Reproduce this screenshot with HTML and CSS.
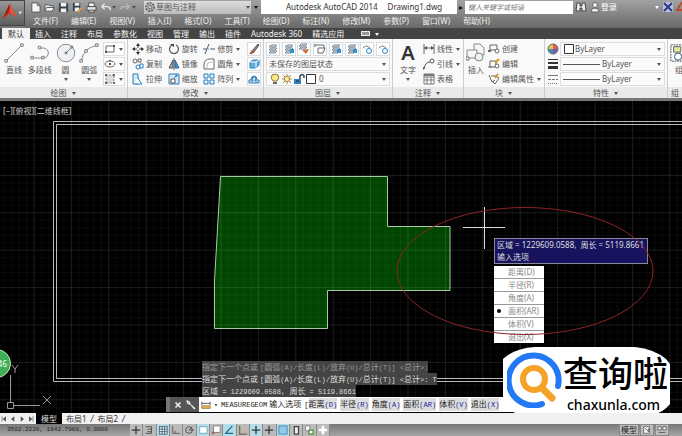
FILE: index.html
```html
<!DOCTYPE html>
<html lang="zh-CN">
<head>
<meta charset="utf-8">
<title>Autodesk AutoCAD 2014 - Drawing1.dwg</title>
<link rel="stylesheet" href="styles.css">
</head>
<body>
<svg class="defs" aria-hidden="true">
  <symbol id="new" viewBox="0 0 12 12"><path d="M2 1h6l3 3v7H2z" fill="#f4f6f8" stroke="#555"/><path d="M8 1v3h3" fill="none" stroke="#555"/></symbol>
  <symbol id="open" viewBox="0 0 12 12"><path d="M1 10V3h4l1 1h4v2" fill="#dde3e8" stroke="#555"/><path d="M1 10l2-4h8l-2 4z" fill="#f4f6f8" stroke="#555"/></symbol>
  <symbol id="save" viewBox="0 0 12 12"><path d="M1 1h9l1 1v9H1z" fill="#34404c"/><path d="M3 1h6v4H3zM3 7h6v4H3z" fill="#eef2f5"/></symbol>
  <symbol id="saveas" viewBox="0 0 12 12"><path d="M1 1h8v9H1z" fill="#34404c"/><path d="M3 1h5v3H3zM3 6h5v4H3z" fill="#eef2f5"/><path d="M6 11l5-5" stroke="#d79a42" stroke-width="2"/></symbol>
  <symbol id="print" viewBox="0 0 12 12"><path d="M3 1h6v4H3zM3 8h6v3H3z" fill="#fff" stroke="#444"/><path d="M1 5h10v4H1z" fill="#e0e2e4" stroke="#444"/></symbol>
  <symbol id="undo" viewBox="0 0 12 12"><path d="M5 2L2 5l3 3M2 5h6q3 0 3 3v1" fill="none" stroke="#e5e5e5" stroke-width="1.500"/></symbol>
  <symbol id="redo" viewBox="0 0 12 12"><path d="M7 2l3 3-3 3M10 5H4Q1 5 1 8" fill="none" stroke="#bbb" stroke-width="1.500"/></symbol>
  <symbol id="gear" viewBox="0 0 12 12"><circle cx="6" cy="6" r="4" fill="none" stroke="#666" stroke-width="2" stroke-dasharray="2 1"/><circle cx="6" cy="6" r="2" fill="none" stroke="#666"/></symbol>
  <symbol id="caret" viewBox="0 0 6 6"><path d="M1 2h4L3 5z" fill="currentColor"/></symbol>
  <symbol id="binoc" viewBox="0 0 12 12"><path d="M2 2h3v3h2V2h3l1 8H7V7H5v3H1z" fill="#eee" stroke="#444"/></symbol>
  <symbol id="user" viewBox="0 0 12 12"><circle cx="6" cy="4" r="2.5" fill="#eee" stroke="#666"/><path d="M2 11q0-4 4-4t4 4z" fill="#eee" stroke="#666"/></symbol>
  <symbol id="exchange" viewBox="0 0 12 12"><path d="M1 1h10v10H1z" fill="#b9c0de"/><path d="M2 2l8 8M10 2l-8 8" stroke="#2d3b87" stroke-width="2"/></symbol>
  <symbol id="line" viewBox="0 0 24 24"><path d="M3 21L21 3" stroke="#777"/><path d="M1 20h3v3H1zM20 1h3v3h-3z" fill="#fff" stroke="#666"/></symbol>
  <symbol id="pline" viewBox="0 0 24 24"><path d="M3 18h13a6 6 0 0 0 0-12h-4" fill="none" stroke="#777"/><path d="M1 16h3v3H1zM14 16h3v3h-3zM10 4h3v3h-3z" fill="#fff" stroke="#666"/></symbol>
  <symbol id="circle" viewBox="0 0 24 24"><circle cx="12" cy="12" r="10.5" fill="#eef1f4" stroke="#778"/><path d="M12 12l7-7" stroke="#667"/><path d="M11 11h2v2h-2zM18 4h2v2h-2z" fill="#fff" stroke="#556"/></symbol>
  <symbol id="arc" viewBox="0 0 24 24"><path d="M3 21Q5 6 21 3" fill="none" stroke="#777"/><path d="M1 20h3v3H1zM7 8h3v3H7zM20 1h3v3h-3z" fill="#fff" stroke="#666"/></symbol>
  <symbol id="rect" viewBox="0 0 12 12"><path d="M2 3h8v6H2z" fill="none" stroke="#666"/><path d="M1 8h2v2H1zM9 2h2v2H9z" fill="#555"/></symbol>
  <symbol id="ellipse" viewBox="0 0 12 12"><ellipse cx="6" cy="6" rx="5" ry="3" fill="none" stroke="#666"/><path d="M5 5h2v2H5zM5 2h2v1H5z" fill="#555"/></symbol>
  <symbol id="hatch" viewBox="0 0 12 12"><path d="M2 2h8v8H2z" fill="#ddd" stroke="#888" stroke-dasharray="2 1"/><path d="M1 1h2v2H1zM9 1h2v2H9zM1 9h2v2H1zM9 9h2v2H9z" fill="#666"/></symbol>
  <symbol id="move" viewBox="0 0 12 12"><path d="M6 1v10M1 6h10" stroke="#444" stroke-dasharray="4 2"/><path d="M4 3l2-3 2 3zM4 9l2 3 2-3zM3 4L0 6l3 2zM9 4l3 2-3 2z" fill="#333"/></symbol>
  <symbol id="rotate" viewBox="0 0 12 12"><path d="M4 2a4.500 4.500 0 1 0 4 0" fill="none" stroke="#555" stroke-width="1.200"/><path d="M2 1h4v3z" fill="#444"/></symbol>
  <symbol id="trim" viewBox="0 0 12 12"><path d="M0 6h4M8 6h4M2 11L6 1" fill="none" stroke="#4d5a66"/><path d="M5 6h3" stroke="#4b94cc" stroke-dasharray="1 1"/></symbol>
  <symbol id="copy" viewBox="0 0 12 12"><circle cx="3" cy="3" r="2" fill="none" stroke="#666"/><path d="M6 1h3v3H6z" fill="none" stroke="#666"/><circle cx="6" cy="9" r="2" fill="#fff" stroke="#287cc0"/><path d="M8 6h3v4H8z" fill="#fff" stroke="#287cc0"/></symbol>
  <symbol id="mirror" viewBox="0 0 12 12"><path d="M5 2v8H1z" fill="#9ab" stroke="#555"/><path d="M7 2v8h4z" fill="#4292cf" stroke="#26689b"/><path d="M6 0v12" stroke="#555"/></symbol>
  <symbol id="fillet" viewBox="0 0 12 12"><path d="M1 11V7q0-6 6-6h4v10z" fill="#fff" stroke="#666"/><path d="M4 11V8q0-4 4-4h3" fill="none" stroke="#bbb"/></symbol>
  <symbol id="stretch" viewBox="0 0 12 12"><path d="M1 1h5v10H1z" fill="#d9eaf7" stroke="#287cc0"/><path d="M5 4l5 7H3" fill="#fff" stroke="#287cc0"/></symbol>
  <symbol id="scale" viewBox="0 0 12 12"><path d="M1 1h10v10H1z" fill="#d9eaf7" stroke="#287cc0"/><path d="M3 6h4v4H3z" fill="#fff" stroke="#555"/><path d="M6 5l3-3M7 2h2v2" fill="none" stroke="#287cc0"/></symbol>
  <symbol id="array" viewBox="0 0 12 12"><path d="M1 1h4v4H1zM7 1h4v4H7zM1 7h4v4H1zM7 7h4v4H7z" fill="#eaf4fb" stroke="#287cc0"/></symbol>
  <symbol id="erase" viewBox="0 0 12 12"><path d="M4 8l6-7 1 1-5 7z" fill="#888" stroke="#555"/><path d="M4 7l3 2-3 2H1z" fill="#a85a4d"/></symbol>
  <symbol id="explode" viewBox="0 0 12 12"><path d="M2 4l3-2h6v5L8 10H2z" fill="#62add9" stroke="#2280bd"/><path d="M2 4h6v6M8 4l3-2" fill="none" stroke="#fff"/></symbol>
  <symbol id="offset" viewBox="0 0 12 12"><path d="M1 10V7h2a3 4 0 1 1 6 0h2v3z" fill="#cae3f4" stroke="#2878b4"/><path d="M3 8h2q-2-4 1-4t1 4h2" fill="none" stroke="#2878b4"/></symbol>
  <symbol id="layer" viewBox="0 0 12 12"><path d="M4 2h6L8 4H2zM4 5h6L8 7H2zM4 8h6l-2 2H2z" fill="#dfe5ea" stroke="#758595"/></symbol>
  <symbol id="layerblue" viewBox="0 0 12 12"><path d="M4 2h6L8 4H2zM4 5h6L8 7H2zM4 8h6l-2 2H2z" fill="#dfe5ea" stroke="#758595"/><path d="M7 6h4v4H7z" fill="#388ecb"/></symbol>
  <symbol id="layerorange" viewBox="0 0 12 12"><path d="M3 1h6L7 3H1zM3 4h6L7 6H1z" fill="#dfe5ea" stroke="#758595"/><path d="M4 7l4 4 3-5z" fill="#c96e37"/></symbol>
  <symbol id="layerprev" viewBox="0 0 12 12"><path d="M1 2h9v3M1 1v3M4 5h7l-2 5H4z" fill="#fff" stroke="#666"/></symbol>
  <symbol id="layersun" viewBox="0 0 12 12"><path d="M2 5q3-4 7 0" fill="none" stroke="#777"/><circle cx="8" cy="8" r="2.500" fill="#fff" stroke="#278acb"/></symbol>
  <symbol id="bulb" viewBox="0 0 12 12"><path d="M4 8Q1 5 3 2q3-2 6 0 2 3-1 6z" fill="#fbe88a" stroke="#927b3a"/><path d="M4 10h4" stroke="#666" stroke-width="2"/></symbol>
  <symbol id="sun" viewBox="0 0 12 12"><path d="M6 1v10M1 6h10M2 2l8 8M10 2l-8 8" stroke="#a5853c"/><circle cx="6" cy="6" r="2.500" fill="#fff2a8" stroke="#a5853c"/></symbol>
  <symbol id="lock" viewBox="0 0 12 12"><path d="M1 6h7v5H1z" fill="#2f83c1"/><path d="M7 6V3q2-3 4 0v2M3 8h3" fill="none" stroke="#345" stroke-width="1.500"/></symbol>
  <symbol id="square" viewBox="0 0 12 12"><path d="M1.500 1.500h9v9h-9z" fill="#fff" stroke="#333"/></symbol>
  <symbol id="dim" viewBox="0 0 12 12"><path d="M1 1v10M11 1v10M1 5h10" fill="none" stroke="#666"/><path d="M1 5l3-2v4zM11 5L8 3v4z" fill="#555"/></symbol>
  <symbol id="leader" viewBox="0 0 12 12"><path d="M1 11Q2 4 7 4" fill="none" stroke="#555"/><circle cx="9" cy="3" r="2" fill="none" stroke="#555"/><path d="M0 12V9l2 1z" fill="#555"/></symbol>
  <symbol id="table" viewBox="0 0 12 12"><path d="M1 1h10v10H1zM1 4h10M1 7h10M4 4v7M8 4v7" fill="#fff" stroke="#777"/><path d="M1 1h10v2H1z" fill="#777"/></symbol>
  <symbol id="insert" viewBox="0 0 20 20"><path d="M8 1h6l4 4v7H8z" fill="#f4f5f6" stroke="#888"/><path d="M1 7h10v8H1z" fill="#f7f7f7" stroke="#888"/><circle cx="13" cy="14" r="4" fill="#eef1f4" stroke="#888"/><path d="M0 14h3v3H0z" fill="#fff" stroke="#777"/></symbol>
  <symbol id="create" viewBox="0 0 12 12"><path d="M2 2h7v5H2z" fill="none" stroke="#666"/><circle cx="9" cy="8" r="2" fill="#fff" stroke="#666"/><path d="M0 7h3v2H0z" fill="#666"/></symbol>
  <symbol id="edit" viewBox="0 0 12 12"><path d="M2 3h6v6H2zM0 9h4" fill="none" stroke="#666"/><circle cx="9" cy="8" r="2" fill="#fff" stroke="#666"/><path d="M7 5l4-4" stroke="#d39427" stroke-width="2"/></symbol>
  <symbol id="attr" viewBox="0 0 12 12"><path d="M1 2l3 7 3-2M3 3h5l3 2-4 6-3-3" fill="#fff" stroke="#665"/><path d="M7 5l3-4" stroke="#d39427" stroke-width="2"/></symbol>
  <symbol id="wheel" viewBox="0 0 12 12"><path d="M6 6V1a5 5 0 0 1 5 5z" fill="#db6258"/><path d="M6 6h5a5 5 0 0 1-5 5z" fill="#7b5ab0"/><path d="M6 6v5a5 5 0 0 1-5-5z" fill="#3b92ad"/><path d="M6 6H1a5 5 0 0 1 5-5z" fill="#e4c454"/><circle cx="6" cy="6" r="5" fill="none" stroke="#666"/></symbol>
  <symbol id="weight" viewBox="0 0 12 12"><path d="M1 1.500h10" stroke="#333"/><path d="M1 5h10" stroke="#333" stroke-width="2"/><path d="M1 9.500h10" stroke="#333" stroke-width="3"/></symbol>
  <symbol id="ltype" viewBox="0 0 12 12"><path d="M1 2.500h10" stroke="#777"/><path d="M1 6.500h10" stroke="#777" stroke-dasharray="3 1"/><path d="M1 10.500h10" stroke="#777" stroke-dasharray="1 1"/></symbol>
  <symbol id="group" viewBox="0 0 20 20"><path d="M1 1h18v18H1z" fill="#fff" stroke="#333" stroke-dasharray="2 1"/><path d="M4 3h8v6H4z" fill="#e1eaa1" stroke="#555"/><circle cx="9" cy="14" r="4" fill="#fff" stroke="#246"/></symbol>
  <symbol id="cross" viewBox="0 0 12 12"><path d="M6 1v10M1 6h10" stroke="#333" stroke-width="1.500"/></symbol>
  <symbol id="snap" viewBox="0 0 12 12"><path d="M2 2h7v8H2M4 5h5M4 8h5" fill="none" stroke="#444"/></symbol>
  <symbol id="grid" viewBox="0 0 12 12"><path d="M1 1h10v10H1z" fill="#fff"/><path d="M1 2h10M1 5h10M1 8h10M1 11h10M2 1v10M5 1v10M8 1v10M11 1v10" stroke="#2e566e"/></symbol>
  <symbol id="ortho" viewBox="0 0 12 12"><path d="M2 1v9h9M5 7v3" fill="none" stroke="#555"/></symbol>
  <symbol id="polar" viewBox="0 0 12 12"><circle cx="6" cy="6" r="4" fill="none" stroke="#444"/><path d="M6 6h6M6 6l4-4" stroke="#444"/></symbol>
  <symbol id="osnap" viewBox="0 0 12 12"><path d="M2 2h9v8H2z" fill="#fff" stroke="#6c9fae"/></symbol>
  <symbol id="osnap3" viewBox="0 0 12 12"><path d="M3 1h8v8H3z" fill="#fff" stroke="#777"/><path d="M1 8h3v3H1z" fill="#b35b4e"/></symbol>
  <symbol id="track" viewBox="0 0 12 12"><path d="M10 1L2 10h9" fill="none" stroke="#1d6f8b" stroke-width="1.500"/></symbol>
  <symbol id="ducs" viewBox="0 0 12 12"><path d="M2 1v10h9" fill="none" stroke="#765" stroke-width="1.500"/><path d="M3 9l7-7v7z" fill="#c6b8a3"/></symbol>
  <symbol id="tpy" viewBox="0 0 12 12"><path d="M1 1h10v10H1z" fill="#92cbea" stroke="#3e86ad"/></symbol>
  <symbol id="qp" viewBox="0 0 12 12"><path d="M4 2h5v9H4z" fill="#eee" stroke="#444" stroke-width="1.500"/></symbol>
  <symbol id="sc" viewBox="0 0 12 12"><path d="M2 1h5v6H2z" fill="#fff" stroke="#777"/><path d="M6 6h5v5H6z" fill="#fff" stroke="#46902f" stroke-width="1.500"/></symbol>
  <symbol id="plus" viewBox="0 0 12 12"><path d="M6 1v10M1 6h10" stroke="#fff" stroke-width="3"/></symbol>
</svg>

<header class="top">
  <button class="app" aria-label="应用程序菜单">
    <svg viewBox="0 0 25 26"><path d="M3 18L10 3l7 13-5-2-3-1-3 4z" fill="#c5301e"/><path d="M10 3l7 13-6-3-1-4-2 3-5 6z" fill="#e4573b"/><path d="M10 3L3 18l5-6 2-4z" fill="#8e1a10"/><path d="M19 11h4l-2 3z" fill="#ddd"/></svg>
  </button>
  <div class="bars">
    <div class="title-row">
      <div class="quick">
        <button aria-label="新建"><svg><use href="#new"/></svg></button>
        <button aria-label="打开"><svg><use href="#open"/></svg></button>
        <button aria-label="保存"><svg><use href="#save"/></svg></button>
        <button aria-label="另存为"><svg><use href="#saveas"/></svg></button>
        <button aria-label="打印"><svg><use href="#print"/></svg></button>
        <button aria-label="放弃"><svg><use href="#undo"/></svg><svg class="caret"><use href="#caret"/></svg></button>
        <button aria-label="重做"><svg><use href="#redo"/></svg><svg class="caret"><use href="#caret"/></svg></button>
      </div>
      <div class="workspace">
        <svg class="i12"><use href="#gear"/></svg>
        <select aria-label="工作空间"><option>草图与注释</option></select>
        <svg class="caret"><use href="#caret"/></svg>
      </div>
      <button class="more" aria-label="自定义"><svg class="caret"><use href="#caret"/></svg></button>
      <div class="caption"><span>Autodesk AutoCAD 2014</span><span>Drawing1.dwg</span></div>
      <button class="play" aria-label="展开">▸</button>
      <input class="search" type="text" aria-label="搜索" placeholder="键入关键字或短语">
      <div class="account">
        <svg class="i12"><use href="#binoc"/></svg>
        <button><svg class="i12"><use href="#user"/></svg>登录</button>
        <svg class="caret push"><use href="#caret"/></svg>
        <svg class="i12"><use href="#exchange"/></svg>
        <svg class="i6" viewBox="0 0 6 12"><path d="M6 1L1 9h5" fill="none" stroke="#b94b36" stroke-width="2"/></svg>
      </div>
    </div>
    <nav class="menu">
      <a href="#">文件(F)</a><a href="#">编辑(E)</a><a href="#">视图(V)</a><a href="#">插入(I)</a><a href="#">格式(O)</a><a href="#">工具(T)</a><a href="#">绘图(D)</a><a href="#">标注(N)</a><a href="#">修改(M)</a><a href="#">参数(P)</a><a href="#">窗口(W)</a><a href="#">帮助(H)</a>
    </nav>
  </div>
</header>

<nav class="tabs">
  <a class="on" href="#">默认</a><a href="#">插入</a><a href="#">注释</a><a href="#">布局</a><a href="#">参数化</a><a href="#">视图</a><a href="#">管理</a><a href="#">输出</a><a href="#">插件</a><a href="#">Autodesk 360</a><a href="#">精选应用</a>
  <button aria-label="最小化功能区"><i></i><svg class="caret"><use href="#caret"/></svg></button>
</nav>

<main class="ribbon">
  <section class="panel">
    <div class="body draw">
      <button class="big"><svg><use href="#line"/></svg>直线</button>
      <button class="big"><svg><use href="#pline"/></svg>多段线</button>
      <button class="big"><svg><use href="#circle"/></svg>圆<svg class="caret"><use href="#caret"/></svg></button>
      <button class="big"><svg><use href="#arc"/></svg>圆弧<svg class="caret"><use href="#caret"/></svg></button>
      <div class="stack">
        <button class="split" aria-label="矩形"><svg class="i12"><use href="#rect"/></svg><svg class="caret"><use href="#caret"/></svg></button>
        <button class="split" aria-label="椭圆"><svg class="i12"><use href="#ellipse"/></svg><svg class="caret"><use href="#caret"/></svg></button>
        <button class="split" aria-label="图案填充"><svg class="i12"><use href="#hatch"/></svg><svg class="caret"><use href="#caret"/></svg></button>
      </div>
    </div>
    <h2>绘图<svg class="caret"><use href="#caret"/></svg></h2>
  </section>

  <section class="panel">
    <div class="body modify">
      <button><svg class="i12"><use href="#move"/></svg>移动</button>
      <button><svg class="i12"><use href="#rotate"/></svg>旋转</button>
      <button><svg class="i12"><use href="#trim"/></svg>修剪<svg class="caret"><use href="#caret"/></svg></button>
      <button class="tile" aria-label="删除"><svg class="i12"><use href="#erase"/></svg></button>
      <button><svg class="i12"><use href="#copy"/></svg>复制</button>
      <button><svg class="i12"><use href="#mirror"/></svg>镜像</button>
      <button><svg class="i12"><use href="#fillet"/></svg>圆角<svg class="caret"><use href="#caret"/></svg></button>
      <button class="tile" aria-label="分解"><svg class="i12"><use href="#explode"/></svg></button>
      <button><svg class="i12"><use href="#stretch"/></svg>拉伸</button>
      <button><svg class="i12"><use href="#scale"/></svg>缩放</button>
      <button><svg class="i12"><use href="#array"/></svg>阵列<svg class="caret"><use href="#caret"/></svg></button>
      <button class="tile" aria-label="偏移"><svg class="i12"><use href="#offset"/></svg></button>
    </div>
    <h2>修改<svg class="caret"><use href="#caret"/></svg></h2>
  </section>

  <section class="panel">
    <div class="body rows">
      <div class="tools">
        <button class="tile" aria-label="图层特性"><svg class="i12"><use href="#layer"/></svg></button>
        <button class="tile" aria-label="置为当前"><svg class="i12"><use href="#layerblue"/></svg></button>
        <button class="tile" aria-label="匹配"><svg class="i12"><use href="#layerorange"/></svg></button>
        <button class="tile" aria-label="上一个"><svg class="i12"><use href="#layerprev"/></svg></button>
        <button class="tile" aria-label="隔离"><svg class="i12"><use href="#layerblue"/></svg></button>
        <button class="tile" aria-label="取消隔离"><svg class="i12"><use href="#layerblue"/></svg></button>
        <button class="tile" aria-label="冻结"><svg class="i12"><use href="#layersun"/></svg></button>
        <button class="tile" aria-label="关闭"><svg class="i12"><use href="#layersun"/></svg></button>
      </div>
      <div class="combo"><select aria-label="图层状态"><option>未保存的图层状态</option></select><svg class="caret"><use href="#caret"/></svg></div>
      <div class="combo"><svg class="i12"><use href="#bulb"/></svg><svg class="i12"><use href="#sun"/></svg><svg class="i12"><use href="#lock"/></svg><svg class="i12"><use href="#square"/></svg><select class="name" aria-label="图层"><option>0</option></select><svg class="caret"><use href="#caret"/></svg></div>
    </div>
    <h2>图层<svg class="caret"><use href="#caret"/></svg></h2>
  </section>

  <section class="panel">
    <div class="body side">
      <button class="big"><span class="letter">A</span>文字<svg class="caret"><use href="#caret"/></svg></button>
      <div class="stack">
        <button><svg class="i12"><use href="#dim"/></svg>线性<svg class="caret"><use href="#caret"/></svg></button>
        <button><svg class="i12"><use href="#leader"/></svg>引线<svg class="caret"><use href="#caret"/></svg></button>
        <button><svg class="i12"><use href="#table"/></svg>表格</button>
      </div>
    </div>
    <h2>注释<svg class="caret"><use href="#caret"/></svg></h2>
  </section>

  <section class="panel">
    <div class="body side">
      <button class="big"><svg><use href="#insert"/></svg>插入</button>
      <div class="stack">
        <button><svg class="i12"><use href="#create"/></svg>创建</button>
        <button><svg class="i12"><use href="#edit"/></svg>编辑</button>
        <button><svg class="i12"><use href="#attr"/></svg>编辑属性<svg class="caret"><use href="#caret"/></svg></button>
      </div>
    </div>
    <h2>块<svg class="caret"><use href="#caret"/></svg></h2>
  </section>

  <section class="panel">
    <div class="body rows">
      <div class="prop"><svg class="i12"><use href="#wheel"/></svg><div class="combo"><svg class="i12"><use href="#square"/></svg><select aria-label="颜色"><option>ByLayer</option></select><svg class="caret"><use href="#caret"/></svg></div></div>
      <div class="prop"><svg class="i12"><use href="#weight"/></svg><div class="combo"><i class="rule"></i><select aria-label="线宽"><option>ByLayer</option></select><svg class="caret"><use href="#caret"/></svg></div></div>
      <div class="prop"><svg class="i12"><use href="#ltype"/></svg><div class="combo"><i class="rule"></i><select aria-label="线型"><option>ByLayer</option></select><svg class="caret"><use href="#caret"/></svg></div></div>
    </div>
    <h2>特性<svg class="caret"><use href="#caret"/></svg></h2>
  </section>

  <section class="panel last">
    <div class="body"><button class="big"><svg><use href="#group"/></svg>组</button></div>
    <h2>组</h2>
  </section>
</main>

<div class="canvas">
  <svg class="drawing" aria-label="图形" viewBox="0 101 682 313" preserveAspectRatio="xMinYMin slice">
    <defs>
      <pattern id="minor" x="33.500" y="137.500" width="7.480" height="7.480" patternUnits="userSpaceOnUse"><path d="M0 0H8M0 0V8" stroke="#fff" stroke-opacity=".07" fill="none"/></pattern>
      <pattern id="major" x="33.500" y="137.500" width="37.400" height="37.400" patternUnits="userSpaceOnUse"><path d="M.5 0V38M0 .5H38" stroke="#fff" stroke-opacity=".08" fill="none"/></pattern>
    </defs>
    <path d="M682 121.500H53.500V381.500H682M682 124.500H56.500V378.500H682" fill="none" stroke="#b9b9b9"/>
    <path d="M220.500 176.500H387.500V226.500H450V290.500H327.500V328.500H214.500V281z" fill="#004500" stroke="#a9c9a4"/>
    <path d="M0 101H682V414H0z" fill="url(#minor)"/>
    <path d="M0 101H682V414H0z" fill="url(#major)"/>
    <path d="M463 227.500H505M484.500 207V249" stroke="#ddd"/>
    <path d="M10.500 402V375M13 405.500H40M7.500 402.500h6v6h-6zM43 396l8 8M51 396l-8 8M12 365l3 4 3-4M15 369v4" fill="none" stroke="#9a9a9a"/>
  </svg>
  <span class="view">[−][俯视][二维线框]</span>
  <span class="badge">46</span>

  <div class="tooltip">区域 = 1229609.0588,&nbsp; 周长 = 5119.8661<br>输入选项</div>
  <div class="options">
    <button>距离(D)</button><button>半径(R)</button><button>角度(A)</button><button class="sel">面积(AR)</button><button>体积(V)</button><button>退出(X)</button>
  </div>
  <svg class="mark" viewBox="0 0 258 130"><ellipse cx="129" cy="65" rx="128" ry="63.500" fill="none" stroke="#8c2326"/></svg>

  <div class="history">
    <p class="dim">指定下一个点或 <code>[</code>圆弧<code>(A)/</code>长度<code>(L)/</code>放弃<code>(U)/</code>总计<code>(T)] &lt;</code>总计<code>&gt;:</code></p>
    <p>指定下一个点或 <code>[</code>圆弧<code>(A)/</code>长度<code>(L)/</code>放弃<code>(U)/</code>总计<code>(T)] &lt;</code>总计<code>&gt;: T</code></p>
    <p>区域<code> = 1229609.0588, </code>周长<code> = 5119.8661</code></p>
  </div>
  <div class="command">
    <span class="grip"></span>
    <button aria-label="关闭"><svg viewBox="0 0 12 12"><path d="M3 3l6 6M9 3l-6 6" stroke="#eee" stroke-width="2"/></svg></button>
    <button aria-label="自定义"><svg viewBox="0 0 12 12"><path d="M1 1q0 4 4 4l5 6 1-1-6-5q0-4-4-4l3 2-1 2z" fill="#eee" stroke="#eee"/></svg></button>
    <div class="line">
      <svg class="measure" viewBox="0 0 12 12"><path d="M1 2v4M11 2v4M1 4h10" stroke="#444"/><path d="M1 7h10v3H1z" fill="#e7bd56" stroke="#98752b"/></svg><svg class="caret"><use href="#caret"/></svg>
      <span><code>MEASUREGEOM</code> 输入选项</span>
      <span><code>[</code><a href="#">距离<code>(D)</code></a></span><a href="#">半径<code>(R)</code></a><a href="#">角度<code>(A)</code></a><a href="#">面积<code>(AR)</code></a><a href="#">体积<code>(V)</code></a><a href="#">退出<code>(X)</code></a>
    </div>
  </div>

  <div class="brand">
    <svg class="plate" viewBox="0 0 167 68" preserveAspectRatio="none"><path d="M0 12Q12 1 32 0H132Q151 2 163 12L167 17V57Q158 68 145 68H15L0 58z" fill="#fff"/></svg>
    <svg class="lens" viewBox="0 0 56 56"><path d="M35 52A25 25 0 1 1 51 34" fill="none" stroke="#2378f5" stroke-width="6" stroke-linecap="round"/><circle cx="27" cy="27" r="11" fill="none" stroke="#f5a328" stroke-width="6"/><path d="M36 37l9 9" stroke="#f5a328" stroke-width="7" stroke-linecap="round"/></svg>
    <div class="words"><strong>查询啦</strong><span>chaxunla.com</span></div>
  </div>
</div>

<nav class="layouts">
  <button aria-label="第一个"><svg viewBox="0 0 12 12"><path d="M3 2v8" stroke="#555"/><path d="M9 2v8L4 6z" fill="#555"/></svg></button>
  <button aria-label="上一个"><svg viewBox="0 0 12 12"><path d="M8 2v8L3 6z" fill="#555"/></svg></button>
  <button aria-label="下一个"><svg viewBox="0 0 12 12"><path d="M4 2v8l5-4z" fill="#555"/></svg></button>
  <button aria-label="最后一个"><svg viewBox="0 0 12 12"><path d="M9 2v8" stroke="#555"/><path d="M3 2v8l5-4z" fill="#555"/></svg></button>
  <a class="on" href="#">模型</a><a href="#">布局1</a><i>/</i><a href="#">布局2</a><i>/</i>
</nav>

<footer class="status">
  <span class="coords">3502.2228, 1642.7968, 0.0000</span>
  <div class="toggles">
    <button aria-label="推断约束"><svg><use href="#cross"/></svg></button><button aria-label="捕捉"><svg><use href="#snap"/></svg></button><button class="lit" aria-label="栅格"><svg><use href="#grid"/></svg></button><button aria-label="正交"><svg><use href="#ortho"/></svg></button><button aria-label="极轴"><svg><use href="#polar"/></svg></button><button class="lit" aria-label="对象捕捉"><svg><use href="#osnap"/></svg></button><button aria-label="三维对象捕捉"><svg><use href="#osnap3"/></svg></button><button class="lit" aria-label="对象追踪"><svg><use href="#track"/></svg></button><button aria-label="动态UCS"><svg><use href="#ducs"/></svg></button><button class="lit" aria-label="动态输入"><svg><use href="#cross"/></svg></button><button aria-label="线宽显示"><svg><use href="#cross"/></svg></button><button class="lit" aria-label="透明度"><svg><use href="#tpy"/></svg></button><button aria-label="快捷特性"><svg><use href="#qp"/></svg></button><button aria-label="选择循环"><svg><use href="#sc"/></svg></button><button aria-label="注释监视器"><svg><use href="#plus"/></svg></button>
  </div>
  <div class="right">
    <button>模型</button>
    <button aria-label="快速查看布局"><svg viewBox="0 0 12 12"><path d="M2 2h7v8H2z" fill="#eee" stroke="#666"/><path d="M4 4l4 4V4" fill="none" stroke="#444"/></svg></button>
    <button aria-label="快速查看图形"><svg viewBox="0 0 12 12"><path d="M1 2h4v4H1zM7 2h4v4H7zM2 9h8" fill="#eee" stroke="#555"/></svg></button>
  </div>
</footer>
</body>
</html>
```
FILE: styles.css
```css
* { box-sizing: border-box; }

body {
  margin: 0;
  height: 100vh;
  display: flex;
  flex-direction: column;
  overflow: hidden;
  background: #000;
  color: #555;
  font: 8px/12px "Noto Sans", "Noto Sans CJK SC", sans-serif;
  white-space: nowrap;
}

button, select, input {
  margin: 0;
  padding: 0;
  border: 0;
  background: none;
  color: inherit;
  font: inherit;
  appearance: none;
}
a { color: inherit; text-decoration: none; }
svg { flex: none; display: block; width: 12px; height: 12px; }
code { font: 7px/12px "Liberation Mono", monospace; }
h2, p { margin: 0; font-size: 8px; font-weight: 400; }

.defs { position: absolute; width: 0; height: 0; }
.i12 { width: 12px; height: 12px; }
.i6 { width: 6px; height: 12px; }
.caret { width: 6px; height: 6px; }

/* Title and menu bars */
.top { flex: none; display: flex; height: 28px; background: #777; }
.app { width: 25px; height: 26px; background: linear-gradient(#999, #5c5c5c); border: 1px solid #444; border-left: 0; }
.app svg { width: 24px; height: 25px; }
.bars { flex: 1; min-width: 0; }
.title-row { display: flex; height: 14px; align-items: center; background: linear-gradient(#a2a2a2, #858585); }
.quick { flex: none; display: flex; gap: 3px; width: 119px; padding-left: 5px; }
.quick button { display: flex; align-items: center; }
.quick svg { width: 11px; height: 11px; }
.quick .caret { width: 6px; height: 6px; }
.workspace { flex: none; display: flex; align-items: center; width: 107px; height: 13px; background: linear-gradient(#ddd, #bbb); color: #555; }
.workspace select { flex: 1; }
.more { display: flex; justify-content: center; width: 10px; color: #111; }
.caption { flex: 1; display: flex; gap: 10px; height: 14px; padding-left: 25px; align-items: center; background: #fff; color: #333; }
.play { width: 8px; color: #111; }
.search { width: 108px; height: 13px; padding-left: 3px; background: #fff; font-size: 7px; font-style: italic; }
.search::placeholder { color: #777; }
.account { display: flex; align-items: center; width: 109px; gap: 2px; padding-left: 2px; color: #fff; }
.account button { display: flex; align-items: center; }
.push { margin-left: auto; }
.menu { display: flex; gap: 13px; height: 14px; padding-left: 8px; align-items: center; background: linear-gradient(#858585, #696969); color: #eee; }

/* Ribbon */
.tabs { flex: none; display: flex; height: 11px; padding-left: 2px; background: #444; color: #f4f4f4; line-height: 11px; }
.tabs a { padding: 0 5px; }
.tabs .on { padding: 0 6px; background: #f2f2f2; color: #333; }
.tabs button { display: flex; align-items: center; gap: 4px; padding-left: 12px; }
.tabs i { width: 9px; height: 5px; border: 1px solid #eee; background: #999; }

.ribbon {
  flex: none;
  display: grid;
  grid-template-columns: 128fr 136fr 129fr 71fr 81fr 123fr 14fr;
  border-bottom: 3px solid #777;
  background: #f9f9f9;
}
.panel { display: flex; flex-direction: column; min-width: 0; overflow: hidden; border-right: 1px solid #ccc; }
.panel.last { border-right: 0; }
.body { display: flex; height: 48px; padding: 3px 2px 0; }
.panel h2 { display: flex; justify-content: center; align-items: center; gap: 4px; height: 11px; background: #e9e9e9; }
.panel button { display: flex; align-items: center; gap: 2px; }
.panel .big { flex-direction: column; gap: 0; align-items: center; }
.big svg { width: 20px; height: 22px; }
.big .caret { width: 6px; height: 6px; }
.stack, .rows { display: flex; flex-direction: column; gap: 1px; }
.stack button { height: 14px; }
.draw { justify-content: space-between; padding-left: 4px; }
.split { width: 22px; border: 1px solid #ddd; background: #fff; }
.modify { display: grid; grid-template-columns: 36fr 36fr 44fr 14fr; grid-auto-rows: 14px; row-gap: 1px; padding-left: 4px; }
.panel .tile { width: 14px; height: 14px; border: 1px solid #d8dde0; background: #fff; justify-content: center; }
.tools { display: flex; justify-content: space-between; height: 14px; }
.combo { flex: 1; display: flex; align-items: center; min-width: 0; max-height: 14px; padding: 0 2px; border: 1px solid #ddd; background: #fbfbfb; }
.combo select { flex: 1; min-width: 0; }
.combo .name { padding-left: 2px; }
.prop { display: flex; align-items: center; gap: 1px; height: 14px; }
.prop .combo { height: 14px; }
.rule { flex: none; width: 37px; height: 1px; margin-right: 2px; background: #555; }
.side { gap: 2px; justify-content: space-between; }
.side .big { width: 30px; }
.side .stack { flex: 1; }
.letter { color: #333; font: 600 20px/22px "Noto Sans", sans-serif; }
.last .big svg { width: 18px; }

/* Drawing area */
.canvas { position: relative; flex: 1; min-height: 0; overflow: hidden; background: #000; color: #ccc; }
.drawing { width: 100%; height: 100%; }
.view { position: absolute; left: 3px; top: 4px; color: #ccc; }
.badge {
  position: absolute; left: -18px; top: 248px; width: 29px; height: 29px; padding-right: 3px;
  border: 1px solid #bfe8c4; border-radius: 50%; background: #3fae55; color: #fff; line-height: 27px; text-align: right;
}
.tooltip { position: absolute; left: 494px; top: 137px; width: 154px; height: 26px; padding: 0 2px; border: 1px solid #88889b; background: #18135f; color: #ddd; }
.options { position: absolute; left: 494px; top: 165px; display: grid; gap: 1px; width: 50px; background: #999; }
.options button { position: relative; height: 12px; padding-left: 14px; background: #fff; color: #888; text-align: left; }
.options .sel::before { content: ""; position: absolute; left: 3px; top: 4px; width: 4px; height: 4px; border-radius: 50%; background: #000; }
.mark { position: absolute; left: 396px; top: 105px; width: 258px; height: 130px; }
.history { position: absolute; left: 202px; bottom: 16px; display: grid; justify-items: start; color: #ddd; }
.history p { height: 12px; line-height: 12px; background: #444; }
.history .dim { color: #999; }
.command { position: absolute; left: 166px; right: 150px; bottom: 1px; display: flex; align-items: center; gap: 3px; height: 15px; background: #555; }
.grip { width: 4px; height: 100%; background: #777; }
.command svg { width: 10px; height: 10px; }
.line { flex: 1; display: flex; align-items: center; gap: 3px; height: 100%; padding-left: 2px; background: #fff; color: #222; }
.line .caret { width: 4px; height: 4px; }
.line a { background: #ddd; }
.line a code { color: #2323a0; }
.brand { position: absolute; left: 503px; top: 246px; display: flex; width: 167px; height: 68px; }
.plate { position: absolute; width: 167px; height: 68px; }
.lens { position: relative; width: 56px; height: 56px; margin: 5px 0 0 4px; }
.words { position: relative; display: grid; align-content: start; color: #000; }
.words strong { font: 500 35px/50px "Noto Sans CJK SC", sans-serif; }
.words span { padding-left: 4px; font: 500 14px/16px "Noto Sans", sans-serif; }

/* Layout tabs and status bar */
.layouts { flex: none; display: flex; height: 11px; background: #f1f1f1; color: #333; line-height: 11px; }
.layouts button { width: 9px; }
.layouts svg { width: 8px; height: 10px; }
.layouts a { padding: 0 4px; }
.layouts .on { padding: 0 5px; background: #000; color: #ddd; }
.status { flex: none; display: flex; align-items: center; height: 12px; background: linear-gradient(#777, #a5a5a5); color: #222; }
.coords { width: 130px; padding-left: 7px; font: 6px/12px "Liberation Mono", monospace; }
.toggles { display: flex; width: 200px; height: 12px; }
.toggles button { flex: 1; display: grid; place-items: center; border-right: 1px solid #888; background: #bbb; }
.toggles .lit { background: #b5dce9; }
.toggles svg { width: 10px; height: 10px; }
.right { display: flex; align-items: center; gap: 1px; margin-left: auto; padding-right: 13px; }
.right button { background: #bbb; border: 1px solid #888; height: 12px; padding: 0 1px; line-height: 10px; }
.right svg { width: 10px; height: 10px; }
```
